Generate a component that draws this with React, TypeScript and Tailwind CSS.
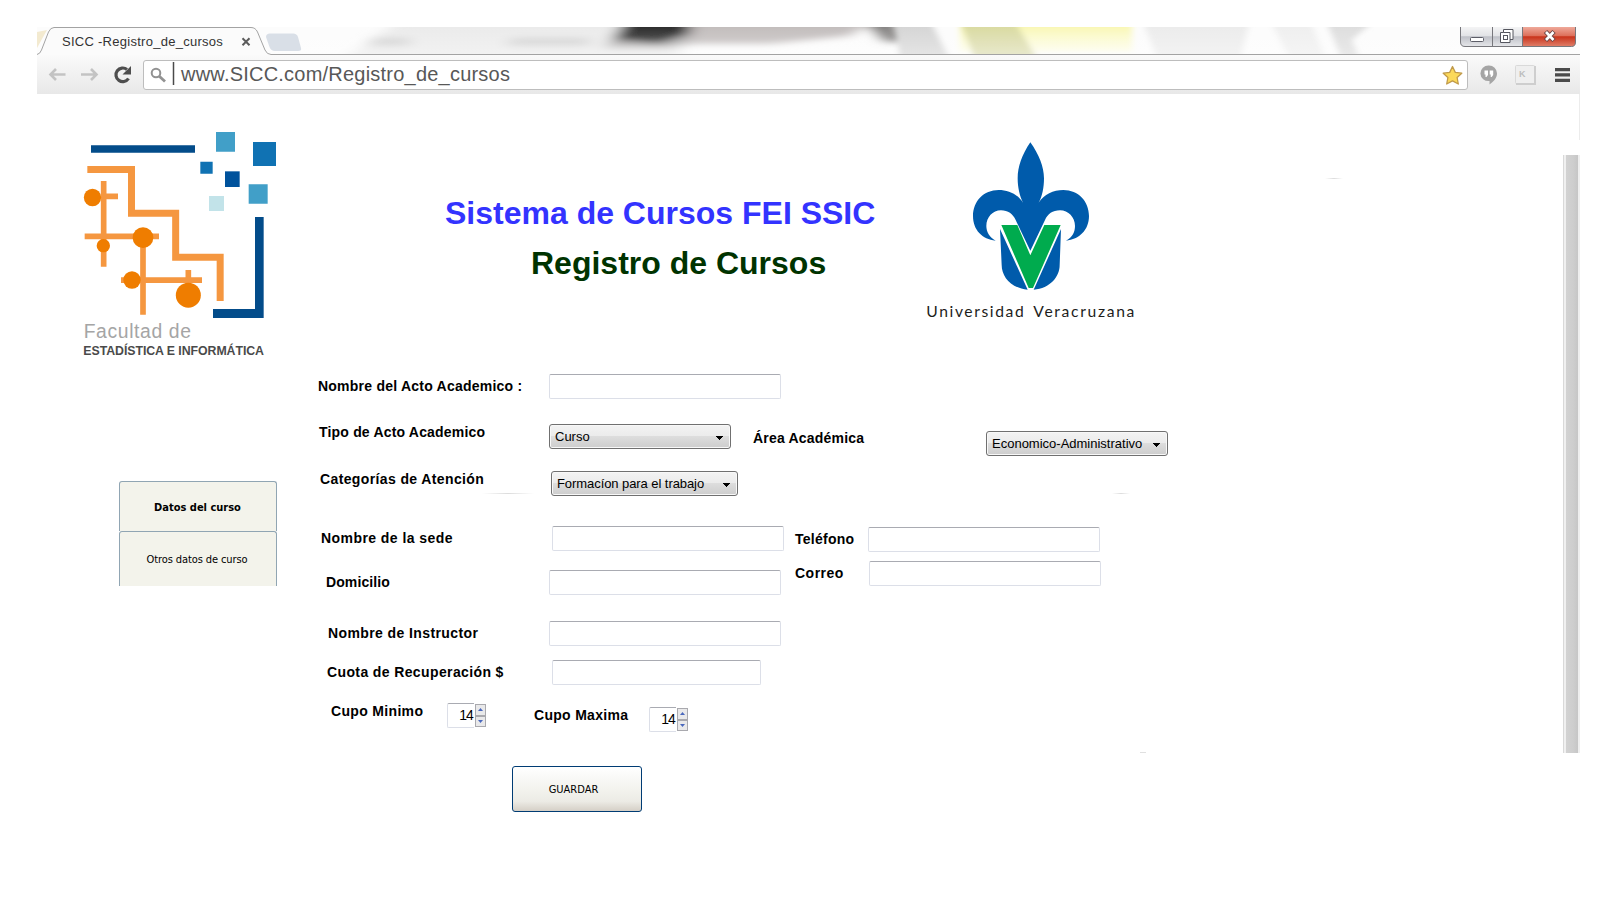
import React from "react";

const sans = "font-['Liberation_Sans',Arial,sans-serif]";
const tahoma = "font-['DejaVu_Sans_Condensed','DejaVu_Sans',sans-serif] [font-stretch:condensed]";

function Label({ children, className }: { children: React.ReactNode; className: string }) {
  return (
    <div className={`shrink-0 whitespace-nowrap text-[14px] leading-4 font-bold text-black ${className}`}>{children}</div>
  );
}

function Input({ className }: { className: string }) {
  return (
    <input
      className={`block h-[25px] shrink-0 rounded-[2px] border border-[#dcdfe8] border-t-[#a9abb2] bg-white outline-none ${className}`}
    />
  );
}

function Select({ className, children }: { className: string; children: string }) {
  return (
    <div
      className={`flex h-[25px] shrink-0 items-center justify-between rounded-[3px] border border-[#707070] bg-[linear-gradient(#f3f3f3_0%,#ebebeb_49%,#dddddd_50%,#cdcdcd_100%)] pr-[6px] pl-[5px] text-[13px] whitespace-nowrap text-black shadow-[inset_0_0_0_1px_#f8f8f8] ${className}`}
    >
      <span className="leading-[23px]">{children}</span>
      <svg className="mt-[3px]" width="8" height="4" viewBox="0 0 8 4" shapeRendering="crispEdges">
        <path d="M0 0H7L3.5 4Z" />
      </svg>
    </div>
  );
}

function Spinner({ className }: { className: string }) {
  return (
    <div className={`flex h-[25px] w-[39px] shrink-0 ${className}`}>
      <div className="w-[27px] rounded-l-[2px] border border-r-0 border-[#dcdfe8] border-t-[#a9abb2] pr-px text-right text-[14px] leading-[23px] tracking-[-0.9px]">
        14
      </div>
      <div className="mt-px ml-px flex h-[23px] w-[11px] flex-col border border-[#a9a9ae] bg-[#e9e9ea]">
        <div className="flex flex-1 items-center justify-center border-b border-[#a9a9ae]">
          <svg width="5" height="3" viewBox="0 0 5 3"><path d="M0 3L2.5 0L5 3Z" fill="#4a68bd" /></svg>
        </div>
        <div className="flex flex-1 items-center justify-center border-t border-[#a9a9ae]">
          <svg width="5" height="3" viewBox="0 0 5 3"><path d="M0 0L2.5 3L5 0Z" fill="#4a68bd" /></svg>
        </div>
      </div>
    </div>
  );
}

function TitleBarGlass() {
  return (
    <svg className="absolute inset-0" width="1543" height="28" viewBox="37 27 1543 28">
      <defs>
        <filter id="b3" x="-20%" y="-60%" width="140%" height="220%"><feGaussianBlur stdDeviation="8 3" /></filter>
        <filter id="b2" x="-20%" y="-60%" width="140%" height="220%"><feGaussianBlur stdDeviation="3 2" /></filter>
        <linearGradient id="yl" x1="0" y1="0" x2="0" y2="1">
          <stop offset="0" stopColor="#f8f6a8" /><stop offset="1" stopColor="#fdfde9" />
        </linearGradient>
        <linearGradient id="fade" x1="0" y1="0" x2="0" y2="1">
          <stop offset="0" stopColor="#fff" stopOpacity="0" /><stop offset="1" stopColor="#fff" stopOpacity=".35" />
        </linearGradient>
      </defs>
      <rect x="37" y="27" width="1543" height="28" fill="#fcfcfc" />
      <g filter="url(#b3)">
        <path d="M340 62L400 20H680V62Z" fill="#ebebeb" />
        <path d="M372 38H410V46H368ZM512 38H590V46H505Z" fill="#d2d2d2" />
        <path d="M604 48L632 18H720L700 42L670 48Z" fill="#b3b1b1" />
        <path d="M612 40L630 14H706L690 34L660 44Z" fill="#2e2e2e" />
        <path d="M690 16H880L850 36L770 44H690Z" fill="#c3bebd" />
        <path d="M860 16H892L905 42H885Z" fill="#7d7a79" />
      </g>
      <g filter="url(#b2)">
        <path d="M895 20H930L950 60H900Z" fill="#d6d6d6" />
        <path d="M960 20H1132V52H960Z" fill="url(#yl)" />
        <path d="M960 20H1014L1038 60H975Z" fill="#d2d39e" opacity=".8" />
        <path d="M1142 20H1250L1240 60H1158Z" fill="#ececec" />
        <path d="M1270 20H1310L1326 60H1290Z" fill="#efefef" />
        <path d="M1326 20H1375L1352 40L1360 60H1342Z" fill="#dedede" />
      </g>
      <rect x="37" y="27" width="1543" height="28" fill="url(#fade)" />
      <path d="M37 32V48L47 30Z" fill="#f3ead0" />
    </svg>
  );
}

function TabShape() {
  return (
    <svg className="absolute inset-0" width="1543" height="28" viewBox="37 27 1543 28">
      <path d="M270 33.5H293Q297 33.5 298 37L301 48Q302 51 298 51H275Q271 51 269.500 47L266 37Q266 33.500 270 33.500Z" fill="#d9dfe7" />
      <path d="M37 54.500Q40 54 41.500 50L48.500 32Q50.500 27.500 54 27.500H251Q255.500 27.500 257.500 32L265 50Q267 54.500 271 54.500H1580V56H37Z" fill="#fbfbfb" />
      <path d="M37 54.500Q40 54 41.500 50L48.500 32Q50.500 27.500 54 27.500H251Q255.500 27.500 257.500 32L265 50Q267 54.500 271 54.500H1580" fill="none" stroke="#a3a3a3" />
      <path d="M242.500 38.200L249.500 45.200M249.500 38.200L242.500 45.200" stroke="#5c5c5c" strokeWidth="2" />
    </svg>
  );
}

function WindowButtons() {
  return (
    <svg className="absolute top-0 right-[3px]" width="118" height="21" viewBox="1459 27 118 21">
      <defs>
        <linearGradient id="wg" x1="0" y1="0" x2="0" y2="1">
          <stop offset="0" stopColor="#f4f4f5" /><stop offset=".45" stopColor="#e2e3e6" /><stop offset=".5" stopColor="#bfc1c8" /><stop offset="1" stopColor="#e6e7ea" />
        </linearGradient>
        <linearGradient id="wr" x1="0" y1="0" x2="0" y2="1">
          <stop offset="0" stopColor="#efa99a" /><stop offset=".45" stopColor="#dd6f5a" /><stop offset=".5" stopColor="#c9331b" /><stop offset="1" stopColor="#e0806a" />
        </linearGradient>
      </defs>
      <path d="M1460.500 27V42Q1460.500 46.500 1465 46.500H1522V27Z" fill="url(#wg)" />
      <path d="M1522 27V46.500H1571.500Q1575.500 46.500 1575.500 42V27Z" fill="url(#wr)" />
      <path d="M1460.500 27V42Q1460.500 46.500 1465 46.500H1571.500Q1575.500 46.500 1575.500 42V27M1492.500 27V46M1522.500 27V46" fill="none" stroke="#77777c" />
      <rect x="1470.500" y="37.500" width="13" height="4" rx="1" fill="#fff" stroke="#5d5e68" />
      <path d="M1503.500 29.500H1513V39.500H1510V42.500H1500.500V32.500H1503.500Z" fill="#fff" stroke="#55565f" />
      <path d="M1503.500 32.500H1510V39.500" fill="none" stroke="#55565f" />
      <rect x="1503.500" y="35.500" width="4" height="4" fill="#fff" stroke="#55565f" />
      <path d="M1545.500 31.500L1554 40.500M1554 31.500L1545.500 40.500" stroke="#6b4545" strokeWidth="4.600" />
      <path d="M1546 32L1553.500 40M1553.500 32L1546 40" stroke="#fff" strokeWidth="2.600" />
    </svg>
  );
}

function Browser() {
  return (
    <header className="ml-[37px] w-[1543px]">
      <div className="relative h-7 overflow-hidden">
        <TitleBarGlass />
        <TabShape />
        <WindowButtons />
        <div className="relative pt-[7px] pl-[25px] text-[13px] leading-4 tracking-[0.27px] whitespace-nowrap text-[#333]">SICC -Registro_de_cursos</div>
      </div>
      <div className="flex h-[39px] items-start bg-[linear-gradient(#fafafa,#e8e8e8)] pt-[5px]">
        <svg width="106" height="29" viewBox="37 60 106 29" fill="none">
          <path d="M65.500 74.500H51M56 69L50.500 74.500L56 80" stroke="#c3c3c3" strokeWidth="2.600" />
          <path d="M81 74.500H96M91 69L96.500 74.500L91 80" stroke="#c3c3c3" strokeWidth="2.600" />
          <path d="M128.500 78.500A6.800 6.800 0 1 1 127 69.500" stroke="#4e4e4e" strokeWidth="3.200" />
          <path d="M131 66V74.500H122.500Z" fill="#4e4e4e" />
        </svg>
        <div className="flex h-[30px] w-[1325px] items-start rounded-[3px] border border-[#bdbdbd] bg-white">
          <svg className="shrink-0" width="37" height="28" viewBox="144 61 37 28" fill="none">
            <circle cx="156" cy="73" r="4.300" stroke="#929292" strokeWidth="2" />
            <path d="M159 76L165 81.500" stroke="#929292" strokeWidth="2.800" />
            <path d="M173.500 62V85" stroke="#4a4a4a" strokeWidth="1.500" />
          </svg>
          <div className="flex-1 pt-px text-[20px] leading-6 tracking-[0.22px] text-[#585858]">www.SICC.com/Registro_de_cursos</div>
          <svg className="mt-[4px] mr-1 shrink-0" width="21" height="21" viewBox="0 0 21 21">
            <path d="M10.500 1.500L13.300 7.400L19.800 8.200L15.100 12.500L16.300 19L10.500 15.900L4.700 19L5.900 12.500L1.200 8.200L7.700 7.400Z" fill="#fbd95a" stroke="#c09a4a" strokeWidth="1.300" strokeLinejoin="round" />
          </svg>
        </div>
        <svg width="112" height="29" viewBox="1468 60 112 29">
          <path d="M1489 65.500A8 8 0 0 1 1497 73.300C1497 78 1494 81.500 1489.500 84.500V81A8 7.800 0 1 1 1489 65.500Z" fill="#a5a5a5" />
          <path d="M1484.500 70.500H1488V75L1486.500 77H1485.500V74.500H1484.500ZM1489.700 70.500H1493.200V75L1491.700 77H1490.700V74.500H1489.700Z" fill="#fff" />
          <rect x="1515.500" y="65.500" width="19" height="18" rx="1" fill="#efefef" stroke="#d9d9d9" />
          <path d="M1516 84H1535V66" fill="none" stroke="#cecece" strokeWidth="2" />
          <text x="1519" y="77" fontSize="9" fontWeight="bold" fill="#bdbdbd" className="font-['Liberation_Sans']">K</text>
          <path d="M1555 68H1570V71.200H1555ZM1555 73.300H1570V76.600H1555ZM1555 78.800H1570V82H1555Z" fill="#4b4b4b" />
        </svg>
      </div>
    </header>
  );
}

function FacultyLogo() {
  return (
    <svg className="shrink-0" width="220" height="250" viewBox="0 0 660 750">
      <g fill="none" stroke="#f59740">
        <path d="M52 148.500H184.500V279.500H317V412H450.500V543" strokeWidth="21" />
        <path d="M101 183V440M101 229H144M44 349H267M219 349V584M153 480.500H396M355 450V500" strokeWidth="17" />
      </g>
      <g fill="#ef7d00">
        <circle cx="67.500" cy="232.500" r="26" />
        <circle cx="219" cy="353" r="31" />
        <circle cx="100" cy="377" r="20" />
        <circle cx="186" cy="480" r="26" />
        <circle cx="355" cy="525.500" r="37.500" />
      </g>
      <path d="M63 76H375V98H63ZM555 291H581V594H429V567H555Z" fill="#034c8a" />
      <path d="M438 36H495V95H438ZM536 193H593V251H536Z" fill="#419fc8" />
      <path d="M549 66H618V138H549ZM391 125H428V161H391Z" fill="#1072b3" />
      <path d="M465 154H509V201H465Z" fill="#00529c" />
      <path d="M417 228H462V273H417Z" fill="#c2e3e9" />
      <text x="41" y="654" fontSize="58" textLength="322" fill="#a5a5a5" className="font-['Liberation_Sans']">Facultad de</text>
      <text x="40" y="705" fontSize="37" fontWeight="bold" textLength="542" fill="#4a4a4a" className="font-['Liberation_Sans']">ESTADÍSTICA E INFORMÁTICA</text>
    </svg>
  );
}

function UniversityLogo() {
  return (
    <svg className="shrink-0" width="240" height="200" viewBox="0 0 720 600">
      <path
        fill="#005bab"
        d="M361 37C387 74 402 110 402 145C402 172 397 200 386 218C402 193 430 180 460 180C505 180 537 214 537 258C537 300 508 328 468 332C488 322 495 305 495 288C495 262 475 241 450 241C428 241 413 252 405 270L361 362L317 270C309 252 294 241 273 241C248 241 229 262 229 288C229 305 238 322 257 332C217 328 189 300 189 258C189 214 221 180 266 180C296 180 324 193 340 219C329 200 323 172 323 145C323 110 336 74 361 37Z"
      />
      <path fill="#005bab" d="M270 297L353 479C303 475 275 440 275 405ZM453 297L371 479C421 475 449 440 449 405Z" />
      <path fill="#00ab4e" d="M274 285H322L361 376L403 285H452L369 474H356Z" />
      <g fontSize="47" fill="#1d1d1b" className="font-['Lato']">
        <text x="49" y="561" textLength="292">Universidad</text>
        <text x="370" y="561" textLength="303">Veracruzana</text>
      </g>
    </svg>
  );
}

function Sidebar() {
  return (
    <nav className={`mt-[111px] ml-[119px] w-[158px] text-center text-[11px] text-black ${tahoma}`}>
      <div className="h-[50px] rounded-t-[3px] border border-b-0 border-[#90a5b3] bg-[#f3f3eb] pr-[1px] leading-[51px] font-bold">Datos del curso</div>
      <div className="h-[55px] rounded-t-[3px] border border-b-0 border-[#90a5b3] bg-[#f3f3eb] pr-[2px] leading-[55px] tracking-[-0.1px]">Otros datos de curso</div>
    </nav>
  );
}

function CourseForm() {
  return (
    <form className="ml-[41px] w-[900px]">
      <div className="flex h-[54px] items-start">
        <Label className="mt-2 w-[231px] tracking-[0.23px]">Nombre del Acto Academico :</Label>
        <Input className="mt-1 w-[232px]" />
      </div>
      <div className="flex h-[47px] items-start">
        <Label className="w-[230px] pl-px tracking-[0.19px]">Tipo de Acto Academico</Label>
        <Select className="ml-px w-[182px]">Curso</Select>
        <Label className="mt-1.5 ml-[22px] w-[233px] tracking-[0.2px]">Área Académica</Label>
        <Select className="mt-[7px] w-[182px]">Economico-Administrativo</Select>
      </div>
      <div className="flex h-[55px] items-start">
        <Label className="w-[233px] pl-0.5 tracking-[0.38px]">Categorías de Atención</Label>
        <Select className="w-[187px] tracking-[-0.07px]">Formacíon para el trabajo</Select>
      </div>
      <div className="flex h-[95px] items-start">
        <div>
          <div className="flex h-11 items-start">
            <Label className="mt-1 w-[234px] pl-[3px] tracking-[0.44px]">Nombre de la sede</Label>
            <Input className="w-[232px]" />
          </div>
          <div className="flex items-start">
            <Label className="mt-1 w-[231px] pl-2 tracking-[0.1px]">Domicilio</Label>
            <Input className="w-[232px]" />
          </div>
        </div>
        <div className="mt-px ml-[11px]">
          <div className="flex h-[34px] items-start">
            <Label className="mt-1 w-[73px] tracking-[0.25px]">Teléfono</Label>
            <Input className="w-[232px]" />
          </div>
          <div className="flex items-start">
            <Label className="mt-1 w-[74px] tracking-[0.5px]">Correo</Label>
            <Input className="w-[232px]" />
          </div>
        </div>
      </div>
      <div className="flex h-[39px] items-start">
        <Label className="mt-1 w-[231px] pl-2.5 tracking-[0.4px]">Nombre de Instructor</Label>
        <Input className="w-[232px]" />
      </div>
      <div className="flex h-[43px] items-start">
        <Label className="mt-1 w-[234px] pl-[9px] tracking-[0.38px]">Cuota de Recuperación $</Label>
        <Input className="w-[209px]" />
      </div>
      <div className="flex h-[63px] items-start">
        <Label className="w-[129px] pl-[13px] tracking-[0.33px]">Cupo Minimo</Label>
        <Spinner className="" />
        <Label className="mt-1 ml-12 w-[115px] tracking-[0.3px]">Cupo Maxima</Label>
        <Spinner className="mt-1" />
      </div>
      <button
        type="button"
        className={`ml-[194px] block h-[46px] w-[130px] rounded-[3px] border border-[#003c74] bg-[linear-gradient(#ffffff_0%,#f3f3ee_50%,#ecebe5_78%,#d5cfc6_100%)] pt-[3px] pr-[7px] text-center text-[11px] text-black ${tahoma}`}
      >
        GUARDAR
      </button>
    </form>
  );
}

export default function App() {
  return (
    <div className={`relative h-[900px] w-[1600px] overflow-hidden bg-white pt-[27px] ${sans}`}>
      <Browser />
      <div className="flex h-[276px] items-start pt-[26px] pl-[70px]">
        <FacultyLogo />
        <div className="mt-[75px] ml-[155px] w-[465px] text-[32px] leading-[36px] font-bold whitespace-nowrap">
          <h1 className="text-[#3333ff]">Sistema de Cursos FEI SSIC</h1>
          <h2 className="mt-[14px] pl-[86px] text-[#003300]">Registro de Cursos</h2>
        </div>
        <div className="mt-[10px]"><UniversityLogo /></div>
      </div>
      <main className="flex items-start">
        <Sidebar />
        <CourseForm />
      </main>
      <div className="absolute top-[155px] left-[1563px] flex h-[598px] w-[17px]">
        <div className="w-px bg-[#d9d9d9]" />
        <div className="w-[2px] bg-[#f0f0f0]" />
        <div className="w-3 bg-[linear-gradient(90deg,#d2d2d2,#cecece_60%,#c6c6c6)]" />
        <div className="w-[2px] bg-[#efefef]" />
      </div>
      <div className="absolute top-[94px] left-[1579px] h-[46px] w-px bg-[#ececec]" />
      <div className="absolute top-[493px] left-[482px] h-px w-[52px] bg-[linear-gradient(90deg,#fff,#dcdcdc,#fff)]" />
      <div className="absolute top-[493px] left-[1112px] h-px w-[18px] bg-[linear-gradient(90deg,#fff,#dcdcdc,#fff)]" />
      <div className="absolute top-[178px] left-[1325px] h-px w-[18px] bg-[linear-gradient(90deg,#fff,#dcdcdc,#fff)]" />
      <div className="absolute top-[752px] left-[1140px] h-px w-[6px] bg-[#e0e0e0]" />
    </div>
  );
}
